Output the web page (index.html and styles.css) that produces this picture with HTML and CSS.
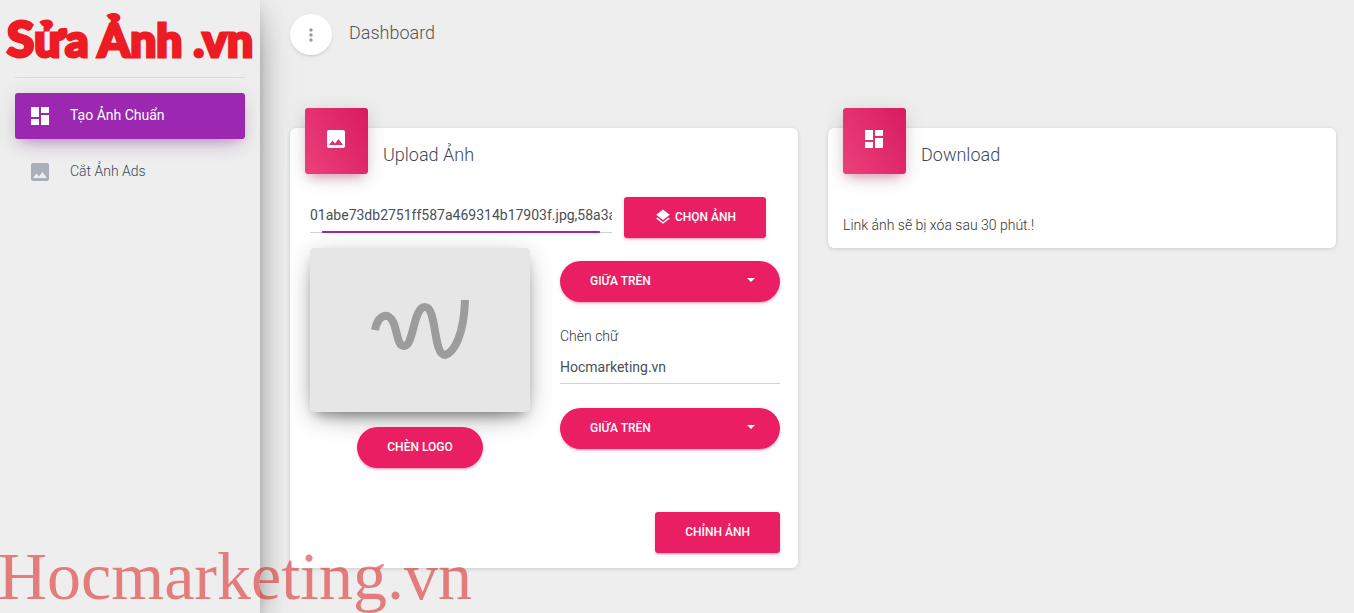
FILE: index.html
```
<!DOCTYPE html>
<html lang="vi">

<head>
    <meta charset="UTF-8">
    <meta name="viewport" content="width=device-width, initial-scale=1.0">
    <title>Sửa Ảnh .vn</title>
    <link rel="stylesheet" href="styles.css">
</head>

<body>
    <div class="wrapper">
        <aside class="sidebar">
            <a href="#" class="logo"><span class="logo-initial">S</span>ửa Ảnh .vn</a>
            <nav class="nav">
                <a href="#" class="nav-link active">
                    <svg class="icon" viewBox="0 0 24 24"><path d="M3 13h8V3H3v10zm0 8h8v-6H3v6zm10 0h8V11h-8v10zm0-18v6h8V3h-8z"/></svg>
                    <span>Tạo Ảnh Chuẩn</span>
                </a>
                <a href="#" class="nav-link">
                    <svg class="icon" viewBox="0 0 24 24"><path d="M21 19V5c0-1.100-.9-2-2-2H5c-1.100 0-2 .9-2 2v14c0 1.100.9 2 2 2h14c1.100 0 2-.9 2-2zM8.500 13.500l2.500 3.010L14.500 12l4.500 6H5l3.500-4.500z"/></svg>
                    <span>Cắt Ảnh Ads</span>
                </a>
            </nav>
        </aside>

        <main class="main">
            <header class="topbar">
                <button type="button" class="btn-round" aria-label="Menu">
                    <svg class="icon-small" viewBox="0 0 24 24"><path d="M12 8c1.100 0 2-.9 2-2s-.9-2-2-2-2 .9-2 2 .9 2 2 2zm0 2c-1.100 0-2 .9-2 2s.9 2 2 2 2-.9 2-2-.9-2-2-2zm0 6c-1.100 0-2 .9-2 2s.9 2 2 2 2-.9 2-2-.9-2-2-2z"/></svg>
                </button>
                <a href="#" class="page-title">Dashboard</a>
            </header>

            <div class="cards">
                <section class="card">
                    <div class="card-header">
                        <div class="card-icon">
                            <svg class="icon" viewBox="0 0 24 24"><path d="M21 19V5c0-1.100-.9-2-2-2H5c-1.100 0-2 .9-2 2v14c0 1.100.9 2 2 2h14c1.100 0 2-.9 2-2zM8.500 13.500l2.500 3.010L14.500 12l4.500 6H5l3.500-4.500z"/></svg>
                        </div>
                        <h4>Upload Ảnh</h4>
                    </div>
                    <form class="upload-form">
                        <div class="file-row">
                            <input type="text" class="file-names" aria-label="Ảnh" value="01abe73db2751ff587a469314b17903f.jpg,58a3a1c0.jpg">
                            <button type="button" class="btn btn-file">
                                <svg class="icon-layers" viewBox="0 0 24 24"><path d="M11.990 18.540l-7.370-5.730L3 14.070l9 7 9-7-1.630-1.270-7.380 5.740zM12 16l7.360-5.730L21 9l-9-7-9 7 1.630 1.270L12 16z"/></svg>
                                Chọn Ảnh
                            </button>
                        </div>
                        <div class="options">
                            <div class="logo-column">
                                <div class="thumbnail">
                                    <svg class="placeholder" viewBox="0 0 98 62"><path d="M4 31C7 15 18 12 23 25C27 37 27 47 33 47C43 47 42 8 54 8C66 8 62 56 74 56C84 53 93 34 94 1"/></svg>
                                </div>
                                <button type="button" class="btn btn-pill">Chèn Logo</button>
                            </div>
                            <div class="text-column">
                                <div class="select">
                                    <select aria-label="Vị trí logo">
                                        <option>Giữa Trên</option>
                                    </select>
                                    <span class="caret"></span>
                                </div>
                                <div class="form-group">
                                    <label for="text">Chèn chữ</label>
                                    <input type="text" id="text" value="Hocmarketing.vn">
                                </div>
                                <div class="select">
                                    <select aria-label="Vị trí chữ">
                                        <option>Giữa Trên</option>
                                    </select>
                                    <span class="caret"></span>
                                </div>
                            </div>
                        </div>
                        <button type="submit" class="btn btn-submit">Chỉnh Ảnh</button>
                    </form>
                </section>

                <section class="card">
                    <div class="card-header">
                        <div class="card-icon">
                            <svg class="icon" viewBox="0 0 24 24"><path d="M3 13h8V3H3v10zm0 8h8v-6H3v6zm10 0h8V11h-8v10zm0-18v6h8V3h-8z"/></svg>
                        </div>
                        <h4>Download</h4>
                    </div>
                    <p class="note">Link ảnh sẽ bị xóa sau 30 phút.!</p>
                </section>
            </div>
        </main>
    </div>
    <div class="watermark">Hocmarketing.vn</div>
</body>

</html>
```
FILE: styles.css
```
* {
    box-sizing: border-box;
}

body {
    margin: 0;
    background-color: #eee;
    color: #3c4858;
    font-family: Roboto, sans-serif;
    font-size: 14px;
    font-weight: 300;
    line-height: 20px;
}

a {
    color: inherit;
    text-decoration: none;
}

input,
select,
button {
    font-family: inherit;
    border: none;
    outline: none;
}

.wrapper {
    display: flex;
    min-height: 100vh;
}

/* Sidebar */
.sidebar {
    flex: none;
    width: 260px;
    background-color: #eee;
    box-shadow: 0 16px 38px -12px rgba(0, 0, 0, 0.56), 0 4px 25px 0 rgba(0, 0, 0, 0.12), 0 8px 10px -5px rgba(0, 0, 0, 0.2);
}

.logo {
    display: flex;
    align-items: baseline;
    justify-content: center;
    height: 77px;
    padding-top: 6px;
    color: #ed1c24;
    font-family: Lato, sans-serif;
    font-size: 46px;
    font-weight: 900;
    line-height: 64px;
    white-space: pre;
    -webkit-text-stroke: 3px #ed1c24;
}

.logo-initial {
    font-size: 50px;
}

.nav {
    display: flex;
    flex-direction: column;
    gap: 10px;
    margin: 0 15px;
    padding-top: 15px;
    border-top: 1px solid #dadada;
}

.nav-link {
    display: flex;
    align-items: center;
    gap: 18px;
    height: 46px;
    padding: 0 13px;
    border-radius: 3px;
}

.nav-link span {
    padding-bottom: 2px;
}

.icon {
    width: 24px;
    height: 24px;
    fill: #a9afbb;
}

.nav-link.active {
    background-color: #9c27b0;
    color: #fff;
    font-weight: 400;
    box-shadow: 0 12px 20px -10px rgba(156, 39, 176, 0.28), 0 4px 20px 0 rgba(0, 0, 0, 0.12), 0 7px 8px -5px rgba(156, 39, 176, 0.2);
}

.active .icon,
.card-icon .icon {
    fill: #fff;
}

/* Main panel */
.main {
    flex: 1;
    min-width: 0;
    padding: 14px 18px 30px 30px;
}

.topbar {
    display: flex;
    align-items: center;
    gap: 17px;
}

.btn-round {
    display: flex;
    align-items: center;
    justify-content: center;
    width: 42px;
    height: 41px;
    border-radius: 50%;
    background-color: #fff;
    box-shadow: 0 2px 2px 0 rgba(153, 153, 153, 0.14), 0 3px 1px -2px rgba(153, 153, 153, 0.2), 0 1px 5px 0 rgba(153, 153, 153, 0.12);
}

.icon-small {
    flex: none;
    width: 20px;
    height: 20px;
    fill: #999;
}

.page-title {
    padding-bottom: 4px;
    color: #555;
    font-size: 18px;
}

.cards {
    display: grid;
    grid-template-columns: 1fr 1fr;
    align-items: start;
    gap: 30px;
    margin-top: 73px;
}

.card {
    border-radius: 6px;
    background-color: #fff;
    box-shadow: 0 1px 4px 0 rgba(0, 0, 0, 0.14);
}

.card-header {
    display: flex;
    gap: 15px;
    padding: 0 15px;
}

.card-header h4 {
    margin: 16px 0 0;
    font-size: 18px;
    font-weight: 300;
    line-height: 22px;
}

.card-icon {
    width: 63px;
    height: 66px;
    margin-top: -20px;
    padding: 19px;
    border-radius: 3px;
    background: linear-gradient(60deg, #ec407a, #d81b60);
    box-shadow: 0 4px 20px 0 rgba(0, 0, 0, 0.14), 0 7px 10px -5px rgba(233, 30, 99, 0.4);
}

.note {
    margin: 0;
    padding: 41px 15px 13px;
    color: #333;
}

/* Upload form */
.upload-form {
    padding: 23px 18px 15px 20px;
}

.file-row {
    display: flex;
    gap: 12px;
    padding-right: 14px;
}

.file-names {
    flex: 1;
    min-width: 0;
    height: 36px;
    padding: 0;
    color: #495057;
    font-size: 14px;
    background: linear-gradient(#9c27b0, #9c27b0) center bottom / 92% 2px no-repeat, linear-gradient(#d2d2d2, #d2d2d2) left bottom / 100% 1px no-repeat;
}

.btn {
    height: 41px;
    padding: 0 30px 2px;
    border-radius: 3px;
    background-color: #e91e63;
    color: #fff;
    font-size: 12px;
    font-weight: 500;
    text-transform: uppercase;
    cursor: pointer;
    box-shadow: 0 2px 2px 0 rgba(233, 30, 99, 0.14), 0 3px 1px -2px rgba(233, 30, 99, 0.2), 0 1px 5px 0 rgba(233, 30, 99, 0.12);
}

.btn-file {
    display: flex;
    align-items: center;
    gap: 3px;
}

.icon-layers {
    width: 18px;
    height: 18px;
    fill: #fff;
}

.btn-pill {
    border-radius: 30px;
}

.options {
    display: grid;
    grid-template-columns: 1fr 1fr;
    gap: 30px;
    margin-top: 10px;
}

.logo-column {
    display: flex;
    flex-direction: column;
    align-items: center;
    gap: 15px;
}

.thumbnail {
    display: flex;
    align-items: center;
    justify-content: center;
    width: 100%;
    height: 164px;
    border-radius: 4px;
    background-color: #e6e6e6;
    box-shadow: 0 5px 15px -8px rgba(0, 0, 0, 0.24), 0 8px 10px -5px rgba(0, 0, 0, 0.2), 0 10px 30px -12px rgba(0, 0, 0, 0.42), 0 4px 25px 0 rgba(0, 0, 0, 0.12);
}

.placeholder {
    width: 98px;
    height: 62px;
    fill: none;
    stroke: #9c9c9c;
    stroke-width: 8px;
}

.text-column {
    padding-top: 13px;
}

.select {
    position: relative;
}

.select select {
    appearance: none;
    width: 100%;
    height: 41px;
    padding: 0 30px 2px;
    border-radius: 30px;
    background-color: #e91e63;
    color: #fff;
    font-size: 12px;
    font-weight: 500;
    text-transform: uppercase;
    box-shadow: 0 2px 2px 0 rgba(233, 30, 99, 0.14), 0 3px 1px -2px rgba(233, 30, 99, 0.2), 0 1px 5px 0 rgba(233, 30, 99, 0.12);
}

.caret {
    position: absolute;
    top: 17px;
    right: 25px;
    border-top: 4px solid #fff;
    border-right: 4px solid transparent;
    border-left: 4px solid transparent;
    pointer-events: none;
}

.form-group {
    margin: 24px 0;
}

.form-group label {
    display: block;
    color: #333;
}

.form-group input {
    width: 100%;
    height: 38px;
    padding: 5px 0 0;
    border-bottom: 1px solid #d2d2d2;
    background: none;
    color: #495057;
    font-size: 14px;
}

.btn-submit {
    display: block;
    margin: 44px 0 0 auto;
}

/* Text stamped over the page */
.watermark {
    position: fixed;
    bottom: 0;
    left: -2px;
    color: rgba(220, 10, 10, 0.5);
    font-family: "Liberation Serif", serif;
    font-size: 68px;
    font-weight: 400;
    line-height: 74px;
    pointer-events: none;
}
```
